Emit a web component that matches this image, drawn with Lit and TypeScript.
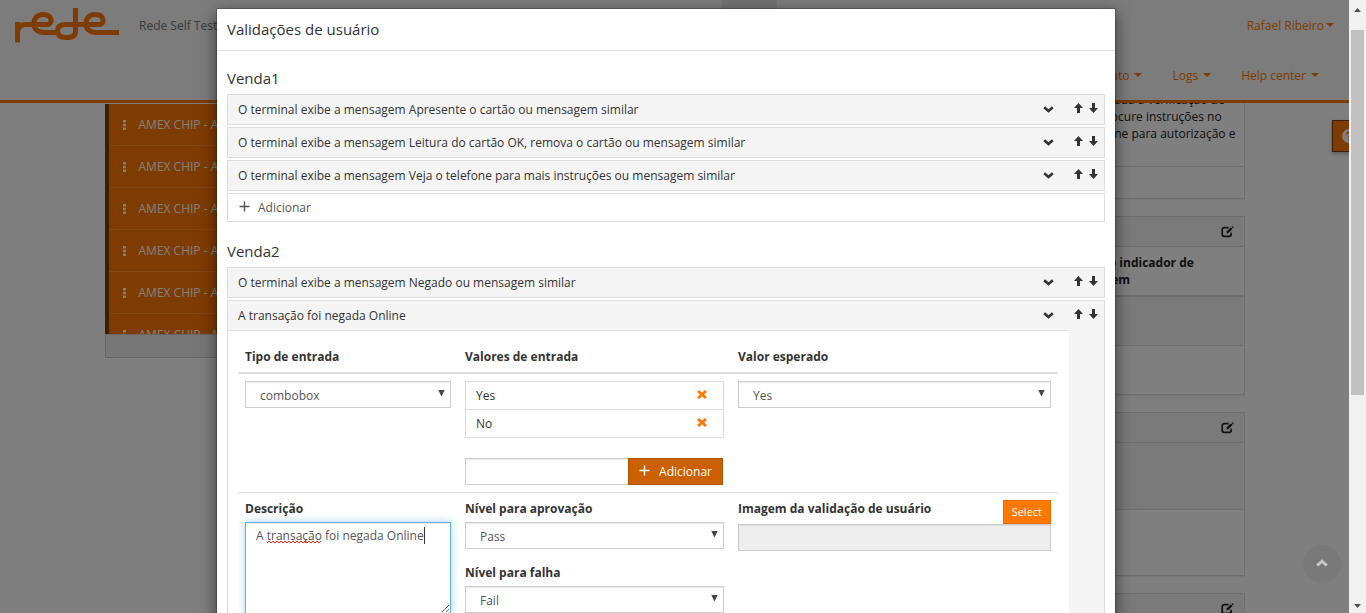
import { LitElement, html, svg, css } from "lit";
import { customElement, property } from "lit/decorators.js";

const caret = html`<svg class="caret" width="8" height="4" viewBox="0 0 8 4" aria-hidden="true"><path d="M0 0h8L4 4z" fill="currentColor" /></svg>`;
const plus = html`<svg width="11" height="11" viewBox="0 0 11 11" aria-hidden="true"><path d="M5.5 .5v10M.5 5.5h10" stroke="currentColor" stroke-width="1.4" /></svg>`;
const chevron = html`<svg width="11" height="7" viewBox="0 0 11 7" aria-hidden="true"><path d="M1.2 1.2l4.3 3.8 4.3-3.8" fill="none" stroke="currentColor" stroke-width="2.6" /></svg>`;
const arrow = svg`<path d="M4.5 0L9 5H6v5H3V5H0z" fill="currentColor" />`;
const arrowUp = html`<svg width="9" height="10" viewBox="0 0 9 10" aria-hidden="true">${arrow}</svg>`;
const arrowDown = html`<svg width="9" height="10" viewBox="0 0 9 10" aria-hidden="true"><g transform="rotate(180 4.5 5)">${arrow}</g></svg>`;
const remove = html`<svg width="10" height="9" viewBox="0 0 10 9" aria-hidden="true"><path d="M1 1l8 7M9 1L1 8" stroke="currentColor" stroke-width="2.8" /></svg>`;
const edit = html`<svg width="13" height="12" viewBox="0 0 13 12" aria-hidden="true">
  <path d="M7.5 1.7H3.2A2 2 0 0 0 1.2 3.7v4.6a2 2 0 0 0 2 2h5a2 2 0 0 0 2-2V6.8" fill="none" stroke="currentColor" stroke-width="1.7" />
  <path d="M5.4 7.4l.5-2.1 4-4 1.6 1.6-4 4z" fill="currentColor" /><path d="M10.6.8l.7-.7 1.5 1.5-.7.7z" fill="currentColor" />
</svg>`;

const base = css`
  * { box-sizing: border-box; }
  button, input, select, textarea { font: inherit; color: inherit; margin: 0; border-radius: 0; }
  button { cursor: pointer; }
  svg { display: block; }
`;

@customElement("select-box")
class SelectBox extends LitElement {
  @property() label = "";
  @property({ type: Array }) options: string[] = [];

  static styles = [base, css`
    :host { display: block; }
    .box { position: relative; color: #555; }
    .field {
      display: block; width: 100%; height: 27px; appearance: none; background: #fff;
      border: 1px solid #ccc; padding: 2px 24px 0 14px; box-shadow: inset 0 1px 1px rgba(0, 0, 0, .08);
    }
    .mark { position: absolute; right: 6px; top: 9px; pointer-events: none; }
  `];

  render() {
    return html`<div class="box">
      <select class="field" aria-label=${this.label}>${this.options.map((o) => html`<option>${o}</option>`)}</select>
      <svg class="mark" width="7" height="7" viewBox="0 0 7 7" aria-hidden="true"><path d="M.3 0h6.4L3.5 6.6z" fill="#444" /></svg>
    </div>`;
  }
}

@customElement("validation-item")
class ValidationItem extends LitElement {
  @property() text = "";
  @property({ type: Boolean }) open = false;

  static styles = [base, css`
    :host { display: block; }
    .item { display: flex; border: 1px solid #ddd; background: #f4f4f4; color: #333; min-height: 31px; }
    .main { flex: 1; min-width: 0; }
    .head {
      display: flex; align-items: center; justify-content: space-between; width: 100%; height: 29px;
      border: 0; background: none; padding: 0 15px 0 10px; text-align: left;
    }
    .body { border-top: 1px solid #ddd; background: #fff; padding: 10px 11px 10px 10px; }
    .moves { display: flex; gap: 6px; width: 35px; height: 29px; padding: 8px 5px 0 5px; }
    .move { border: 0; background: none; padding: 0; height: 10px; }
  `];

  render() {
    return html`<div class="item">
      <div class="main">
        <button class="head" aria-expanded=${this.open ? "true" : "false"}><span>${this.text}</span>${chevron}</button>
        ${this.open ? html`<div class="body"><slot></slot></div>` : null}
      </div>
      <div class="moves">
        <button class="move" aria-label="Mover para cima">${arrowUp}</button>
        <button class="move" aria-label="Mover para baixo">${arrowDown}</button>
      </div>
    </div>`;
  }
}

@customElement("validation-form")
class ValidationForm extends LitElement {
  static styles = [base, css`
    :host { display: block; color: #333; line-height: 17px; }
    .row { display: grid; grid-template-columns: 220fr 273fr 327fr; }
    .cell { padding: 7px; min-width: 0; }
    .title { font-weight: 700; padding: 7px; }
    .titles { border-bottom: 2px solid #ddd; }
    .label { display: block; font-weight: 700; margin-bottom: 5px; }
    .values { list-style: none; margin: 0 0 20px; padding: 0; border: 1px solid #ddd; }
    .value { display: flex; justify-content: space-between; align-items: center; height: 27px; padding: 0 16px 0 10px; }
    .value + .value { height: 28px; border-top: 1px solid #ddd; }
    .remove { border: 0; background: none; padding: 0 0 2px; color: #ff7800; }
    .adder { display: flex; padding-right: 1px; }
    .input { flex: 1; min-width: 0; height: 27px; border: 1px solid #ccc; background: #fff; box-shadow: inset 0 1px 1px rgba(0, 0, 0, .08); padding: 0 10px; }
    .adder .input { border-right: 0; }
    .add { display: flex; align-items: center; gap: 9px; height: 27px; border: 1px solid #b35400; background: #cc6000; color: #fff; padding: 0 10px; }
    .add svg { margin-bottom: 2px; }
    .second { border-top: 1px solid #ddd; }
    .spaced { margin-top: 15px; }
    .area { position: relative; }
    .text {
      display: block; width: 100%; height: 92px; border: 1px solid #66afe9; outline: 0; color: #555; line-height: 17px;
      padding: 4px 10px; box-shadow: inset 0 1px 1px rgba(0, 0, 0, .08), 0 0 8px rgba(102, 175, 233, .6); resize: both;
    }
    .marks { position: absolute; left: 11px; top: 5px; pointer-events: none; }
    .picture { display: flex; justify-content: space-between; align-items: flex-start; height: 24px; }
    .select { height: 24px; border: 1px solid #e66c00; background: #ff7800; color: #fff; font-size: 11px; padding: 0 8px 2px; }
    .input:disabled { width: 100%; display: block; background: #eee; }
  `];

  render() {
    return html`
      <div class="row titles">
        <div class="title">Tipo de entrada</div>
        <div class="title">Valores de entrada</div>
        <div class="title">Valor esperado</div>
      </div>
      <div class="row">
        <div class="cell"><select-box label="Tipo de entrada" .options=${["combobox"]}></select-box></div>
        <div class="cell">
          <ul class="values">
            ${["Yes", "No"].map((v) => html`<li class="value"><span>${v}</span><button class="remove" aria-label="Remover">${remove}</button></li>`)}
          </ul>
          <div class="adder">
            <input class="input" type="text" aria-label="Novo valor" />
            <button class="add">${plus}<span>Adicionar</span></button>
          </div>
        </div>
        <div class="cell"><select-box label="Valor esperado" .options=${["Yes", "No"]}></select-box></div>
      </div>
      <div class="row second">
        <div class="cell">
          <label class="label" for="description">Descrição</label>
          <div class="area">
            <textarea class="text" id="description" .value=${"A transação foi negada Online"}></textarea>
            <svg class="marks" width="170" height="20" viewBox="0 0 170 20" aria-hidden="true">
              <path d="M11 16l2-2 2 2 2-2 2 2 2-2 2 2 2-2 2 2 2-2 2 2 2-2 2 2 2-2 2 2 2-2 2 2 2-2 2 2 2-2 2 2 2-2 2 2 2-2 2 2 2-2 2 2 2-2" fill="none" stroke="#f22" />
              <path d="M168.500 0v17" stroke="#333" />
            </svg>
          </div>
        </div>
        <div class="cell">
          <span class="label">Nível para aprovação</span>
          <select-box label="Nível para aprovação" .options=${["Pass", "Fail"]}></select-box>
          <span class="label spaced">Nível para falha</span>
          <select-box label="Nível para falha" .options=${["Fail", "Pass"]}></select-box>
        </div>
        <div class="cell">
          <div class="picture">
            <label class="label" for="picture">Imagem da validação de usuário</label>
            <button class="select">Select</button>
          </div>
          <input class="input" id="picture" type="text" disabled />
        </div>
      </div>`;
  }
}

@customElement("app-root")
class AppRoot extends LitElement {
  static styles = [base, css`
    :host { display: block; height: 100vh; overflow: hidden; font: 12px/17px "Open Sans", "Noto Sans", sans-serif; color: #333; }
    .frame { display: grid; grid-template: 100% / minmax(0, 1fr) 17px; height: 100%; }
    .page, .veil, .dialog-layer { grid-area: 1 / 1; min-width: 0; overflow: hidden; }
    .page { display: flex; flex-direction: column; background: #fff; position: relative; }
    .veil { position: relative; background: rgba(0, 0, 0, .5); }
    .dialog-layer { position: relative; display: flex; justify-content: center; align-items: flex-start; padding: 8px 17px 0 0; }

    .header { flex: none; display: flex; flex-direction: column; height: 103px; background: #f8f8f8; border-bottom: 3px solid #ff7800; }
    .top { display: grid; grid-template-columns: 722fr 55px 572fr; height: 50px; }
    .brand { display: flex; align-items: flex-start; gap: 19px; padding: 8px 0 0 14px; color: #777; }
    .product { padding-top: 9px; white-space: nowrap; }
    .tab { background: #e4e4e4; }
    .user { display: flex; justify-content: flex-end; padding: 16px 15px 0 0; }
    .link { display: flex; align-items: center; gap: 2px; height: 18px; color: #ff7800; text-decoration: none; white-space: nowrap; }
    .nav { display: flex; justify-content: flex-end; gap: 30px; padding: 16px 30px 0 0; }
    .nav .link { gap: 5px; }

    .content { flex: 1; min-height: 0; overflow: hidden; width: 100%; max-width: 1140px; margin: 0 auto; display: grid; grid-template-columns: 300px minmax(0, 1fr); gap: 30px; align-items: start; }
    .tests { padding-top: 1px; }
    .test-list { list-style: none; margin: 0; padding: 0; max-height: 230px; overflow: hidden; border-left: 4px solid #783c00; background: #ff7800; color: #fff; }
    .test { display: flex; align-items: center; gap: 13px; height: 42px; padding-left: 14px; border-bottom: 1px solid #ff9028; white-space: nowrap; }
    .test-foot { height: 24px; background: #eee; border: 1px solid #ccc; }
    .cards { display: flex; flex-direction: column; gap: 17px; }
    .card { border: 1px solid #ddd; padding-right: 1px; box-shadow: 0 1px 1px rgba(0, 0, 0, .05); }
    .card-head { display: flex; justify-content: flex-end; align-items: center; height: 30px; margin-right: -1px; padding-right: 10px; background: #f5f5f5; border-bottom: 1px solid #ddd; color: #222; }
    .sheet { width: 100%; border-collapse: collapse; table-layout: fixed; color: #222; }
    .sheet th, .sheet td { padding: 7px 0; vertical-align: top; text-align: left; white-space: nowrap; }
    .sheet th { height: 49px; border-bottom: 2px solid #ddd; font-weight: 700; }
    .sheet td { height: 49px; }
    .sheet tr + tr td { border-top: 1px solid #ddd; }
    .last { width: 178px; }
    .striped { background: #f5f5f5; }
    .first { height: 96px; display: flex; flex-direction: column; justify-content: flex-end; border-top: 0; }
    .sheet .end td { height: 32px; }
    .tall td { height: 66px; }

    .help { position: absolute; right: 0; top: 120px; width: 17px; height: 32px; border: 1px solid #783c00; border-right: 0; background: #ff7800; padding: 0 0 0 9px; overflow: hidden; box-shadow: 0 2px 4px rgba(0, 0, 0, .3); }
    .to-top { position: absolute; right: 8px; bottom: 30px; width: 38px; height: 38px; display: grid; place-items: center; border: 0; border-radius: 50%; background: #797979; color: #c8c8c8; padding: 0 0 2px; }

    .dialog { flex: 0 1 900px; min-width: 0; min-height: 700px; background: #fff; background-clip: padding-box; border: 1px solid rgba(0, 0, 0, .2); box-shadow: 0 5px 15px rgba(0, 0, 0, .5); }
    .dialog-title { margin: 0; padding: 10px 10px 11px; border-bottom: 1px solid #e5e5e5; font-size: 15px; line-height: 20px; font-weight: 400; }
    .dialog-body { display: flex; flex-direction: column; gap: 2px; padding: 0 10px; }
    .group-title { margin: 0; padding: 17px 0 6px; font-size: 15px; line-height: 20px; font-weight: 400; }
    .items { display: flex; flex-direction: column; gap: 2px; }
    .add-item { display: flex; align-items: center; gap: 8px; height: 29px; border: 1px solid #ddd; background: #fff; color: #555; padding: 0 11px; }
    .add-item svg { margin-bottom: 2px; }

    .scroll { grid-area: 1 / 2; display: flex; flex-direction: column; align-items: center; justify-content: space-between; background: #f1f1f1; padding: 8px 0 5px; color: #505050; }
    .track { flex: 1; width: 13px; display: flex; flex-direction: column; padding: 18px 0 8px; }
    .thumb { height: 64.5%; background: #c1c1c1; }
  `];

  render() {
    return html`<div class="frame">
      <div class="page">
        <header class="header">
          <div class="top">
            <div class="brand">
              <svg width="106" height="36" viewBox="0 0 106 36" role="img" aria-label="rede" fill="none" stroke="#ff7800" stroke-width="5">
                <path d="M3.500 34.500V14M3.500 24Q4 17 11 16.500H33C39 16.500 39 6.500 29 6.500C17 6.500 16 24.500 30 24.500H45" />
                <path d="M61.500 0V24Q61.500 29.500 52 29.500Q43.500 29.500 43.500 23Q43.500 16.500 52 16.500H85C91 16.500 91 6.500 81 6.500C69 6.500 68 24.500 82 24.500H105" />
              </svg>
              <span class="product">Rede Self Testing Tool</span>
            </div>
            <div class="tab"></div>
            <div class="user"><a class="link" href="#">Rafael Ribeiro${caret}</a></div>
          </div>
          <nav class="nav">
            <a class="link" href="#">Gerenciamento ${caret}</a>
            <a class="link" href="#">Logs ${caret}</a>
            <a class="link" href="#">Help center ${caret}</a>
          </nav>
        </header>
        <main class="content">
          <div class="tests">
            <ul class="test-list">
              ${Array.from({ length: 6 }, () => html`<li class="test">
                <svg width="3" height="10" viewBox="0 0 3 10" aria-hidden="true"><path d="M0 0h3v2.500H0zM0 3.700h3v2.500H0zM0 7.500h3V10H0z" fill="#fff" /></svg>
                <span>AMEX CHIP - Aprovada</span></li>`)}
            </ul>
            <div class="test-foot"></div>
          </div>
          <div class="cards">
            <div class="card first">
              <table class="sheet">
                <colgroup><col /><col class="last" /></colgroup>
                <tr><td></td><td>Foi realizada a verificação de<br />Após, procure instruções no<br />no telefone para autorização e<br />senha.</td></tr>
                <tr class="end"><td></td><td></td></tr>
              </table>
            </div>
            <div class="card">
              <div class="card-head">${edit}</div>
              <table class="sheet">
                <colgroup><col /><col class="last" /></colgroup>
                <tr><th></th><th>Texto do indicador de<br />mensagem</th></tr>
                <tr class="striped"><td></td><td></td></tr>
                <tr><td></td><td></td></tr>
              </table>
            </div>
            <div class="card">
              <div class="card-head">${edit}</div>
              <table class="sheet tall">
                <tr class="striped"><td></td></tr>
                <tr><td></td></tr>
              </table>
            </div>
            <div class="card"><div class="card-head">${edit}</div></div>
          </div>
        </main>
        <button class="help" aria-label="Ajuda"><svg width="14" height="14" viewBox="0 0 14 14" aria-hidden="true"><circle cx="7" cy="7" r="7" fill="#fff" /><path d="M4.700 5.500Q5 3.300 7.200 3.300Q9.500 3.500 9.300 5.300Q9.200 6.300 7.200 7.500V8.500M7.200 9.500V11.300" fill="none" stroke="#ff7800" stroke-width="1.800" /></svg></button>
      </div>
      <div class="veil">
        <button class="to-top" aria-label="Voltar ao topo"><svg width="12" height="8" viewBox="0 0 12 8" aria-hidden="true"><path d="M1.200 6.500L6 2.200l4.800 4.300" fill="none" stroke="currentColor" stroke-width="3" /></svg></button>
      </div>
      <div class="dialog-layer">
        <section class="dialog" role="dialog" aria-labelledby="dialog-title">
          <h1 class="dialog-title" id="dialog-title">Validações de usuário</h1>
          <div class="dialog-body">
            <section>
              <h2 class="group-title">Venda1</h2>
              <div class="items">
                <validation-item text="O terminal exibe a mensagem Apresente o cartão ou mensagem similar"></validation-item>
                <validation-item text="O terminal exibe a mensagem Leitura do cartão OK, remova o cartão ou mensagem similar"></validation-item>
                <validation-item text="O terminal exibe a mensagem Veja o telefone para mais instruções ou mensagem similar"></validation-item>
                <button class="add-item">${plus}<span>Adicionar</span></button>
              </div>
            </section>
            <section>
              <h2 class="group-title">Venda2</h2>
              <div class="items">
                <validation-item text="O terminal exibe a mensagem Negado ou mensagem similar"></validation-item>
                <validation-item text="A transação foi negada Online" open><validation-form></validation-form></validation-item>
              </div>
            </section>
          </div>
        </section>
      </div>
      <div class="scroll" aria-hidden="true">
        <svg width="7" height="4" viewBox="0 0 7 4"><path d="M0 4h7L3.500 0z" fill="currentColor" /></svg>
        <div class="track"><div class="thumb"></div></div>
        <svg width="7" height="4" viewBox="0 0 7 4"><path d="M0 0h7L3.500 4z" fill="currentColor" /></svg>
      </div>
    </div>`;
  }
}
